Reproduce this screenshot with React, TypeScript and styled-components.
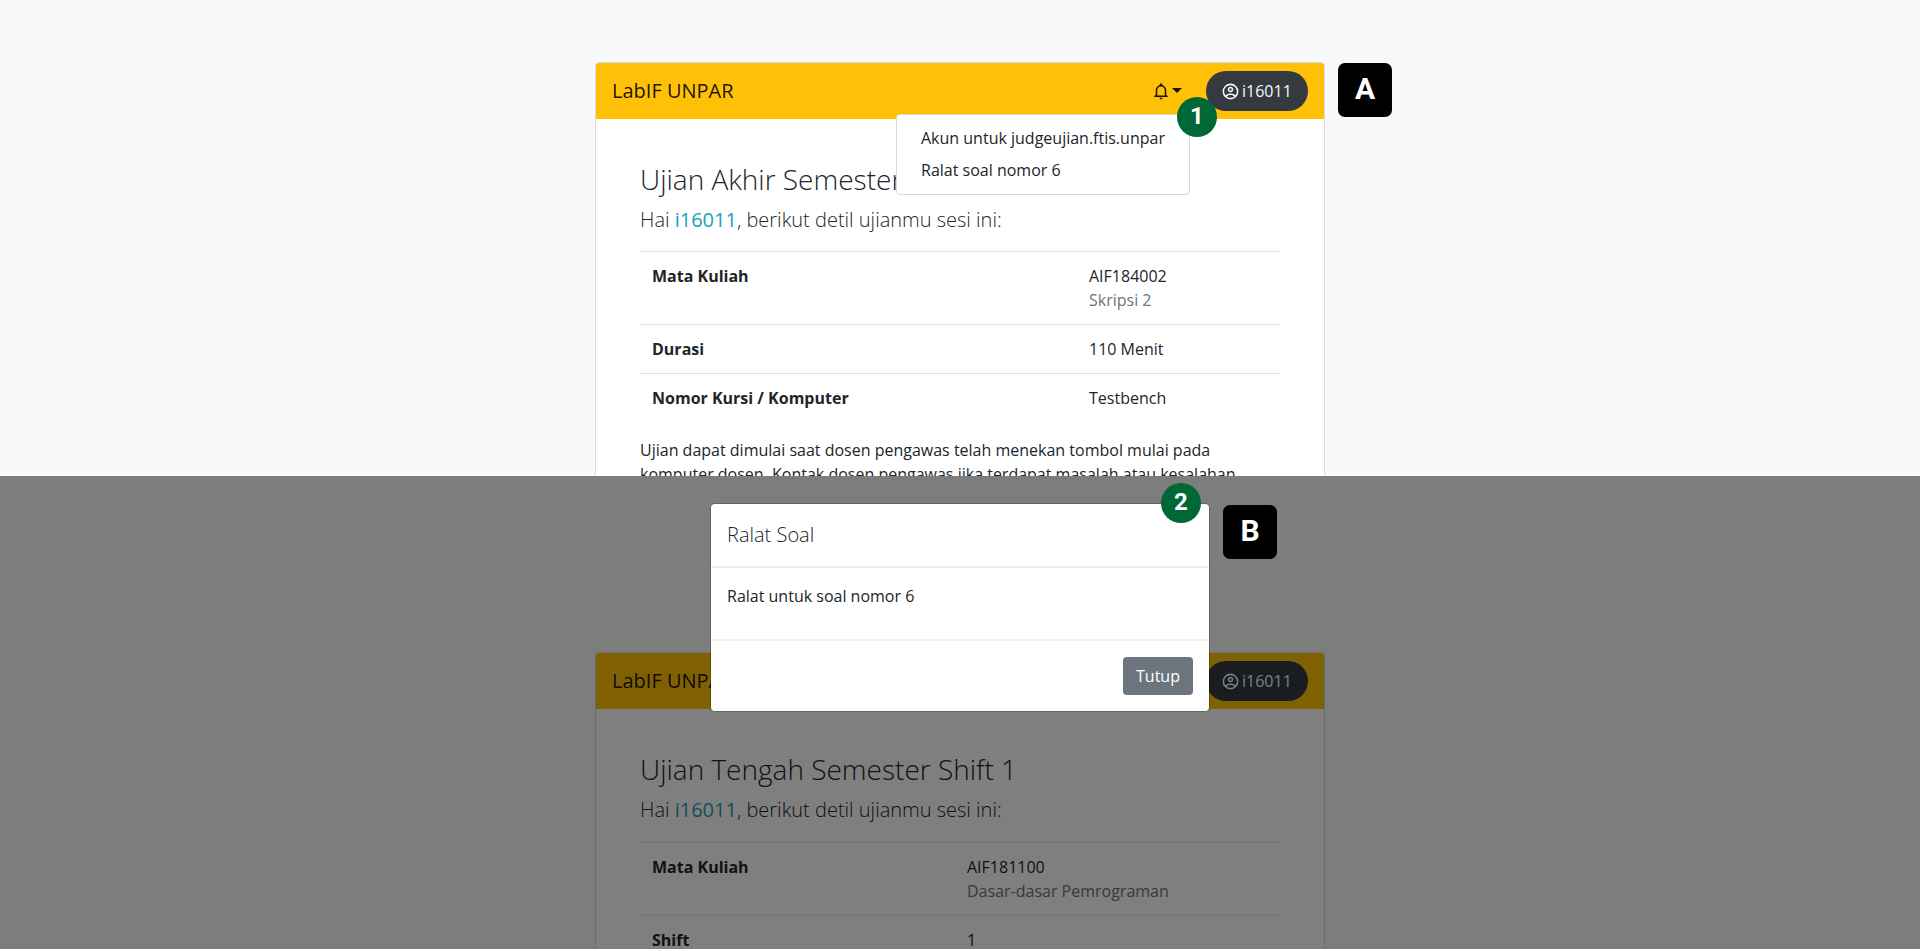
import React from "react";
import styled, { createGlobalStyle, css } from "styled-components";

const GlobalStyle = createGlobalStyle`
  *, *::before, *::after { box-sizing: border-box; }
  body {
    margin: 0;
    background: #fff;
    color: #212529;
    font: 400 16px/24px "Open Sans", "Noto Sans", sans-serif;
    overflow: hidden;
  }
  h1, h2, h3, p { margin: 0; }
`;

const Page = styled.main`
  display: flex;
  flex-direction: column;
  height: 951px;
`;

const Scene = styled.section<{ $height: number; $offset: number; $tint: string }>`
  position: relative;
  display: flex;
  justify-content: center;
  align-items: flex-start;
  height: ${(p) => p.$height}px;
  padding-top: ${(p) => p.$offset}px;
  background: ${(p) => p.$tint};
  overflow: hidden;
`;

const Card = styled.article`
  width: 730px;
  background: #fff;
  border: 1px solid #dcdddf;
  border-radius: 4px;
  flex: none;
`;

const Navbar = styled.header`
  position: relative;
  display: flex;
  align-items: center;
  height: 56px;
  padding: 0 16px;
  background: #ffc107;
  border-radius: 3px 3px 0 0;
`;

const Brand = styled.span`
  flex: 1;
  font-size: 20px;
  line-height: 30px;
  color: rgba(0, 0, 0, 0.9);
`;

const BellButton = styled.button`
  display: flex;
  align-items: center;
  gap: 2px;
  margin-right: 24px;
  padding: 0;
  border: 0;
  background: none;
  color: rgba(0, 0, 0, 0.9);
`;

const Icon = styled.svg<{ $size: number }>`
  flex: none;
  width: ${(p) => p.$size}px;
  height: ${(p) => p.$size}px;
  fill: currentColor;
`;

const Caret = styled.span`
  border: 5px solid transparent;
  border-top-color: currentColor;
  border-bottom: 0;
  margin-bottom: 2px;
`;

const UserPill = styled.button`
  display: flex;
  align-items: center;
  gap: 2px;
  width: 102px;
  height: 40px;
  padding: 0 0 0 15px;
  border: 0;
  border-radius: 20px;
  background: #343a40;
  color: #f8f9fa;
  font: inherit;
`;

const Menu = styled.ul`
  position: absolute;
  top: 51px;
  right: 134px;
  width: 294px;
  height: 81px;
  margin: 0;
  padding: 7px 0;
  list-style: none;
  background: #fff;
  border: 1px solid #d9d9d9;
  border-radius: 4px;
`;

const MenuItem = styled.li`
  padding: 4px 24px;
  color: #212529;
  white-space: nowrap;
`;

const Body = styled.div`
  padding: 44px 44px 0;
`;

const Title = styled.h1`
  font-size: 28px;
  line-height: 32px;
  font-weight: 300;
  white-space: nowrap;
`;

const Greeting = styled.h2`
  margin-top: 13px;
  font-size: 20px;
  line-height: 24px;
  font-weight: 300;

  b {
    font-weight: 400;
    color: #17a2b8;
  }
`;

const Details = styled.dl<{ $soft?: boolean }>`
  margin: 19px 0 16px;
  --rule: ${(p) => (p.$soft ? "2px solid #eef0f2" : "1px solid #dee2e6")};
  --tail: ${(p) => (p.$soft ? "11px" : "12px")};
`;

const DetailRow = styled.div<{ $value: number }>`
  display: grid;
  grid-template-columns: 1fr ${(p) => p.$value}px;
  border-top: var(--rule);

  dt, dd { margin: 0; padding: 12px 12px var(--tail); }
  dt { font-weight: 700; }
`;

const Muted = styled.div`
  color: #6c757d;
`;

const Shade = styled.div`
  position: absolute;
  inset: 0;
  background: rgba(0, 0, 0, 0.5);
`;

const Dialog = styled.div`
  position: absolute;
  top: 28px;
  left: 711px;
  width: 498px;
  height: 207px;
  display: flex;
  flex-direction: column;
  background: #fff;
  border-radius: 4px;
  box-shadow: 0 0 0 1px rgba(0, 0, 0, 0.2);
`;

const DialogTitle = styled.h3`
  height: 64px;
  padding: 16px;
  border-bottom: 2px solid #eff0f1;
  font-size: 20px;
  line-height: 30px;
  font-weight: 300;
`;

const DialogBody = styled.p`
  flex: 1;
  padding: 16px;
`;

const DialogFooter = styled.footer`
  display: flex;
  justify-content: flex-end;
  height: 72px;
  padding: 16px;
  border-top: 2px solid #eff0f1;
`;

const CloseButton = styled.button`
  width: 70px;
  height: 38px;
  border: 0;
  border-radius: 4px;
  background: #6c757d;
  color: #fff;
  font: inherit;
`;

const label = css`
  position: absolute;
  display: flex;
  justify-content: center;
  color: #fff;
  font-family: Roboto, sans-serif;
  font-weight: 700;
`;

const Step = styled.span<{ $x: number; $y: number }>`
  ${label}
  left: ${(p) => p.$x}px;
  top: ${(p) => p.$y}px;
  width: 40px;
  height: 40px;
  border-radius: 50%;
  background: #006837;
  font-size: 24px;
  line-height: 38px;
`;

const Letter = styled.span<{ $x: number; $y: number }>`
  ${label}
  left: ${(p) => p.$x}px;
  top: ${(p) => p.$y}px;
  width: 54px;
  height: 54px;
  border-radius: 7px;
  background: #000;
  font-size: 30px;
  line-height: 51px;
`;

function BellIcon() {
  return (
    <Icon $size={18} viewBox="0 0 24 24">
      <path d="M10 21H14C14 22.1 13.1 23 12 23S10 22.1 10 21M21 19V20H3V19L5 17V11C5 7.9 7.03 5.17 10 4.29C10 4.19 10 4.1 10 4C10 2.9 10.9 2 12 2S14 2.9 14 4C14 4.1 14 4.19 14 4.29C16.97 5.17 19 7.9 19 11V17L21 19M17 11C17 8.24 14.76 6 12 6S7 8.24 7 11V18H17V11Z" />
    </Icon>
  );
}

function AccountIcon() {
  return (
    <Icon $size={19} viewBox="0 0 24 24">
      <path d="M12,2A10,10 0 0,0 2,12A10,10 0 0,0 12,22A10,10 0 0,0 22,12A10,10 0 0,0 12,2M7.07,18.28C7.5,17.38 10.12,16.5 12,16.5C13.88,16.5 16.5,17.38 16.93,18.28C15.57,19.36 13.86,20 12,20C10.14,20 8.43,19.36 7.07,18.28M18.36,16.83C16.93,15.09 13.46,14.5 12,14.5C10.54,14.5 7.07,15.09 5.64,16.83C4.62,15.5 4,13.82 4,12C4,7.59 7.59,4 12,4C16.41,4 20,7.59 20,12C20,13.82 19.38,15.5 18.36,16.83M12,6C10.06,6 8.5,7.56 8.5,9.5C8.5,11.44 10.06,13 12,13C13.94,13 15.5,11.44 15.5,9.5C15.5,7.56 13.94,6 12,6M12,11A1.5,1.5 0 0,1 10.5,9.5A1.5,1.5 0 0,1 12,8A1.5,1.5 0 0,1 13.5,9.5A1.5,1.5 0 0,1 12,11Z" />
    </Icon>
  );
}

function TopBar({ children }: { children?: React.ReactNode }) {
  return (
    <Navbar>
      <Brand>LabIF UNPAR</Brand>
      <BellButton aria-label="Notifikasi">
        <BellIcon />
        <Caret />
      </BellButton>
      <UserPill>
        <AccountIcon />
        i16011
      </UserPill>
      {children}
    </Navbar>
  );
}

function Intro({ title }: { title: string }) {
  return (
    <>
      <Title>{title}</Title>
      <Greeting>
        Hai <b>i16011</b>, berikut detil ujianmu sesi ini:
      </Greeting>
    </>
  );
}

export default function App() {
  return (
    <Page>
      <GlobalStyle />
      <Scene $height={476} $offset={62} $tint="#f8f9fb">
        <Card>
          <TopBar>
            <Menu>
              <MenuItem>Akun untuk judgeujian.ftis.unpar</MenuItem>
              <MenuItem>Ralat soal nomor 6</MenuItem>
            </Menu>
          </TopBar>
          <Body>
            <Intro title="Ujian Akhir Semester" />
            <Details>
              <DetailRow $value={203}>
                <dt>Mata Kuliah</dt>
                <dd>AIF184002<Muted>Skripsi 2</Muted></dd>
              </DetailRow>
              <DetailRow $value={203}>
                <dt>Durasi</dt>
                <dd>110 Menit</dd>
              </DetailRow>
              <DetailRow $value={203}>
                <dt>Nomor Kursi / Komputer</dt>
                <dd>Testbench</dd>
              </DetailRow>
            </Details>
            <p>
              Ujian dapat dimulai saat dosen pengawas telah menekan tombol mulai pada
              komputer dosen. Kontak dosen pengawas jika terdapat masalah atau kesalahan
            </p>
          </Body>
        </Card>
        <Step $x={1177} $y={97}>1</Step>
        <Letter $x={1338} $y={63}>A</Letter>
      </Scene>
      <Scene $height={473} $offset={176} $tint="#f7fcf9">
        <Card>
          <TopBar />
          <Body>
            <Intro title="Ujian Tengah Semester Shift 1" />
            <Details $soft>
              <DetailRow $value={325}>
                <dt>Mata Kuliah</dt>
                <dd>AIF181100<Muted>Dasar-dasar Pemrograman</Muted></dd>
              </DetailRow>
              <DetailRow $value={325}>
                <dt>Shift</dt>
                <dd>1</dd>
              </DetailRow>
            </Details>
          </Body>
        </Card>
        <Shade />
        <Dialog role="dialog">
          <DialogTitle>Ralat Soal</DialogTitle>
          <DialogBody>Ralat untuk soal nomor 6</DialogBody>
          <DialogFooter>
            <CloseButton>Tutup</CloseButton>
          </DialogFooter>
        </Dialog>
        <Step $x={1161} $y={7}>2</Step>
        <Letter $x={1223} $y={29}>B</Letter>
      </Scene>
    </Page>
  );
}
